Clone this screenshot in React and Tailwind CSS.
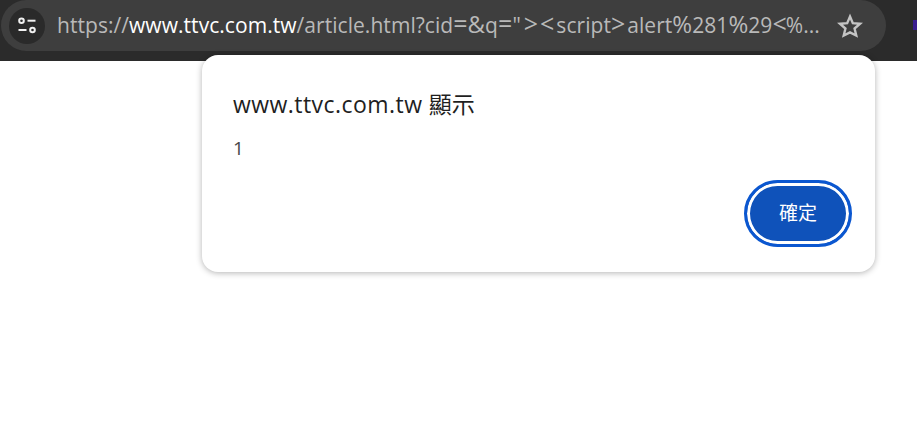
import React from 'react';

function TuneIcon() {
  return (
    <svg width="20" height="20" viewBox="0 0 20 20" fill="none" stroke="#f1f1f1" strokeWidth="2">
      <circle cx="4.5" cy="4.7" r="2.3" />
      <path d="M10.5 4.7h8" />
      <path d="M1.5 14h8" />
      <circle cx="15.5" cy="14" r="2.3" />
    </svg>
  );
}

function StarIcon() {
  return (
    <svg width="26" height="26" viewBox="0 0 24 24" fill="none" stroke="#c4c4c4" strokeWidth="2.2" strokeLinejoin="miter">
      <path d="M12 3.2l2.6 6.2 6.7.5-5.1 4.4 1.6 6.5L12 17.9l-5.8 2.9 1.6-6.5-5.1-4.4 6.7-.5z" />
    </svg>
  );
}

export default function App() {
  return (
    <div className="relative w-[917px] h-[421px] overflow-hidden bg-white font-['Open_Sans','Noto_Sans_CJK_TC',sans-serif]">
      {/* browser bar */}
      <div className="h-[61px] bg-[#2b2b2b] flex items-start pl-[1px]">
        <div className="w-[885px] h-[51px] shrink-0 bg-[#3e3e3e] rounded-full flex items-center pl-[8px] pr-[23px]">
          <div className="w-[36px] h-[36px] shrink-0 rounded-full bg-[#2a2a2a] flex items-center justify-center">
            <TuneIcon />
          </div>
          <div className="ml-[12px] mb-[3px] w-[768px] shrink-0 whitespace-nowrap text-[21px] leading-[28px] tracking-[0.05px] text-[#b9b9b9]">
            https://<span className="text-white">www.ttvc.com.tw</span>/article.html?cid<span className="text-[25px]">=</span><span className="text-[24px]">&amp;</span>q<span className="text-[25px]">=</span><span className="tracking-[3px]">"</span><span className="text-[25px] tracking-[2px]">&gt;&lt;</span>script<span className="text-[25px] tracking-[2px]">&gt;</span>alert<span className="text-[24px]">%</span>281<span className="text-[24px]">%</span>29<span className="text-[25px] tracking-[-1px]">&lt;</span>%...
          </div>
          <div className="ml-auto flex items-center">
            <StarIcon />
          </div>
        </div>
        <div className="ml-auto mt-[20px] w-[4px] h-[10px] bg-[#3a1d8f]" />
      </div>

      {/* alert dialog */}
      <div className="absolute left-[202px] top-[55px] w-[673px] h-[217px] bg-white rounded-[16px] shadow-[0_1px_6px_rgba(0,0,0,0.3)] pl-[31px] pr-[23px] pt-[33px]">
        <div className="text-[23px] leading-[32px] tracking-[0.45px] text-[#1f1f1f]">www.ttvc.com.tw <span className="tracking-normal">顯示</span></div>
        <div className="mt-[15px] text-[19px] leading-[26px] text-[#474747]">1</div>
        <div className="flex justify-end mt-[19px]">
          <button className="w-[108px] h-[67px] rounded-full bg-[#0f52ba] text-white text-[19px] border-[3px] border-[#0b57d0] outline-none ring-[3px] ring-inset ring-white">
            確定
          </button>
        </div>
      </div>
    </div>
  );
}
